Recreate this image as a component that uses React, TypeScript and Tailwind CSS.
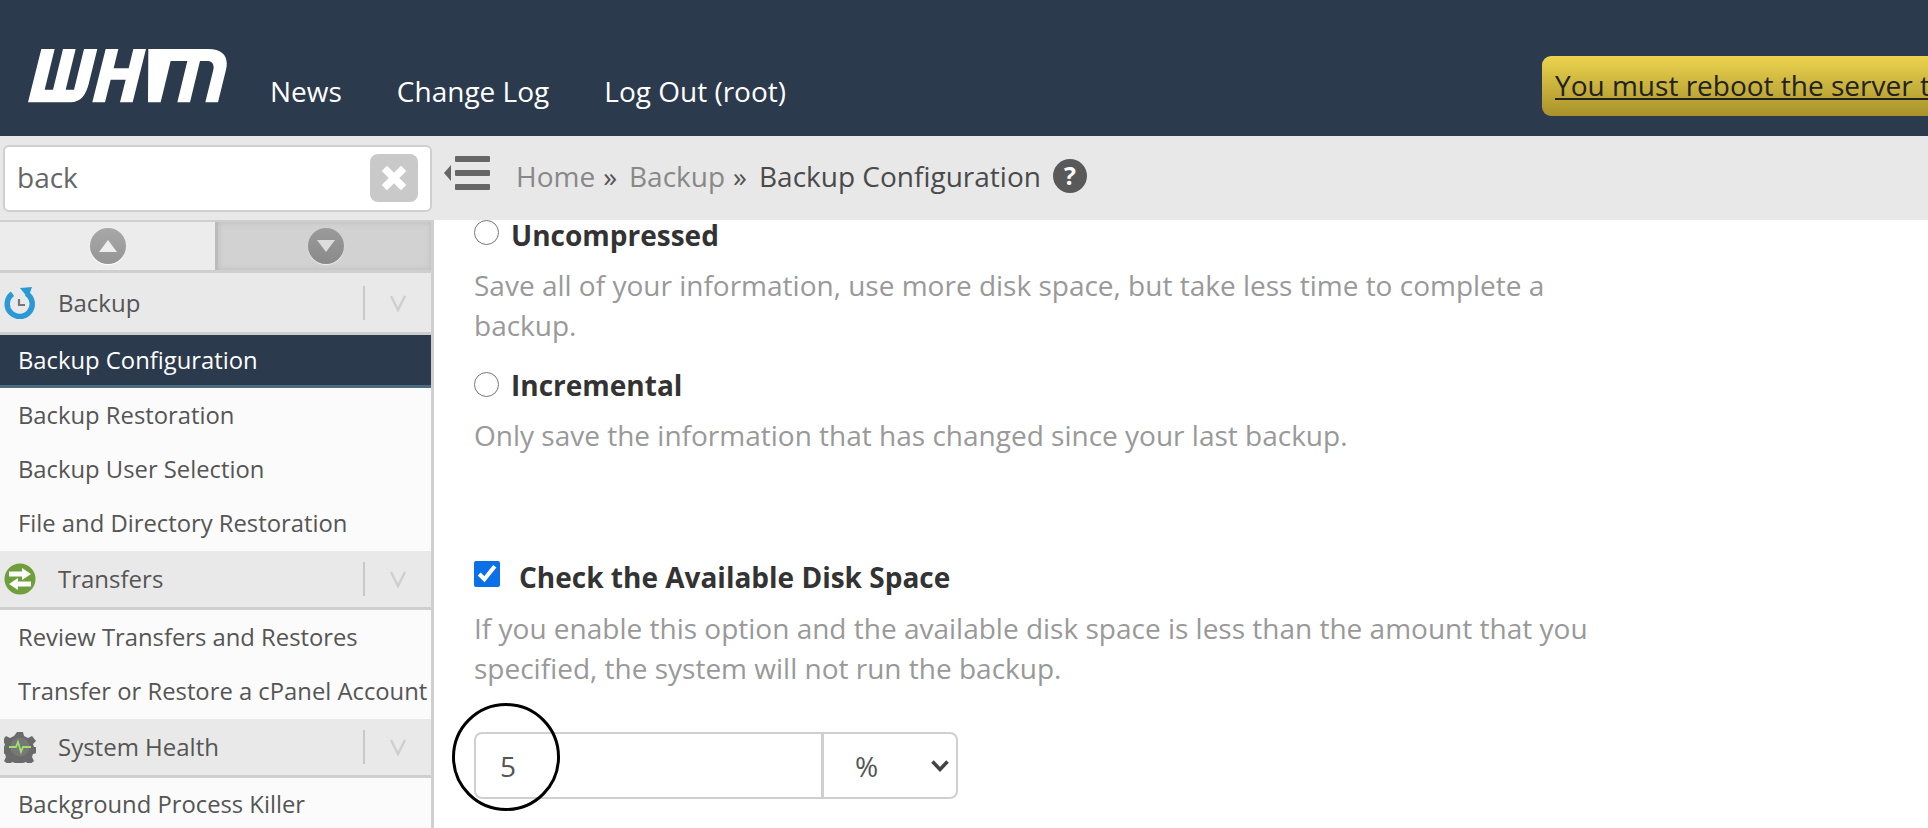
import React from 'react';

const WhmLogo = () => (
    <svg className="w-[200px] h-[55px]" viewBox="85 55 600 165" fill="#fff">
        <path d="M125 58h40l-30 122h25l30-122h38l-30 122h25l30-122h40l-26 105c-8 30-22 55-55 55H85z" />
        <path d="M318 58h38l-14 58h45l14-58h38l-40 160h-38l17-68h-45l-17 68h-38z" />
        <path d="M446 58h180c45 0 62 25 53 62l-24 98h-38l24-98c3-14-2-26-18-26h-22l-30 124h-38l30-124h-50l-30 124h-38z" />
    </svg>
);

const MenuIcon = () => (
    <svg className="w-[46px] h-[34px]" viewBox="0 0 46 34" fill="#666">
        <rect x="11" y="0" width="35" height="6" rx="1" />
        <rect x="11" y="14" width="35" height="6" rx="1" />
        <rect x="11" y="28" width="35" height="6" rx="1" />
        <path d="M0 17l7-8v16z" />
    </svg>
);

const BackupIcon = () => (
    <svg className="w-[32px] h-[32px]" viewBox="0 0 32 32" fill="none">
        <path d="M22.500 6.500A12.500 12.500 0 1 1 8.500 6.800" stroke="#2a9ad6" strokeWidth="5.500" />
        <path d="M16 1l12-1-4 11z" fill="#2a9ad6" />
        <path d="M15 12v6h6" stroke="#777" strokeWidth="2.200" />
    </svg>
);

const TransfersIcon = () => (
    <svg className="w-[32px] h-[32px]" viewBox="0 0 32 32">
        <circle cx="16" cy="16" r="15.500" fill="#6f9e3c" />
        <path d="M5 8.500h13V5l9 6-9 6v-3.500H5z" fill="#fff" />
        <path d="M27 18.500H14V15l-9 6 9 6v-3.500h13z" fill="#fff" />
    </svg>
);

const HealthIcon = () => (
    <svg className="w-[32px] h-[32px]" viewBox="0 0 32 32">
        <path d="M13 1h6l1 4 4 2 4-2 4 5-3 3 1 3h3v6l-4 1-1 3 2 4-5 4-3-3-3 1-1 3h-6l-1-3-3-1-3 3-5-4 2-4-1-3-4-1v-6h3l1-3-3-3 4-5 4 2 4-2z" fill="#6a6a6a" />
        <circle cx="16" cy="16" r="9.500" fill="#777" />
        <path d="M5 16h7l2-5 3 10 2-5h8" fill="none" stroke="#9fe06a" strokeWidth="1.800" />
    </svg>
);

const SectionHeader = ({ icon, label, heightClass }: { icon: React.ReactNode; label: string; heightClass: string }) => (
    <div className={`flex items-center bg-[#e9e9e9] border-b-[3px] border-[#cfcfcf] ${heightClass}`}>
        <div className="w-[58px] pl-[4px] shrink-0 flex items-center">{icon}</div>
        <span className="flex-1 text-[24px] text-[#555]">{label}</span>
        <div className="w-[2px] h-[34px] bg-[#c8c8c8]" />
        <div className="w-[66px] flex justify-center">
            <svg className="w-[18px] h-[18px]" viewBox="0 0 18 18" fill="none" stroke="#cfcfcf" strokeWidth="2.500">
                <path d="M2 2l7 14 7-14" />
            </svg>
        </div>
    </div>
);

const MenuItem = ({ label, heightClass = 'h-[54px]' }: { label: string; heightClass?: string }) => (
    <div className={`flex items-center pl-[18px] bg-[#fbfbfb] text-[23.800px] text-[#555] whitespace-nowrap ${heightClass}`}>
        {label}
    </div>
);

const App: React.FC = () => {
    return (
        <div className="w-[1928px] h-[828px] overflow-hidden bg-white font-['Open_Sans',sans-serif]">
            {/* Top bar */}
            <header className="h-[136px] bg-[#2b3a4c] flex">
                <div className="w-[1542px] shrink-0 flex items-start pl-[28px] pt-[48px]">
                    <WhmLogo />
                    <nav className="flex gap-[55px] ml-[42px] mt-[22px] text-[28px] text-white">
                        <a>News</a>
                        <a>Change Log</a>
                        <a>Log Out (root)</a>
                    </nav>
                </div>
                <div className="shrink-0 mt-[56px] h-[60px] pl-[13px] pr-[20px] pb-[2px] flex items-center rounded-[9px] bg-gradient-to-b from-[#ecd44f] to-[#a8922a] text-[28px] text-[#222] underline whitespace-nowrap">
                    You must reboot the server to apply the update
                </div>
            </header>

            {/* Search and breadcrumb */}
            <div className="h-[84px] bg-[#e8e8e8] flex items-center">
                <div className="w-[429px] h-[67px] ml-[3px] bg-white border-2 border-[#cfcfcf] rounded-[6px] flex items-center pl-[12px] pr-[12px] shrink-0">
                    <span className="flex-1 mb-[2px] text-[28px] text-[#666]">back</span>
                    <div className="w-[48px] h-[48px] rounded-[8px] bg-[#c9c9c9] flex items-center justify-center">
                        <svg className="w-[30px] h-[30px]" viewBox="0 0 28 28" stroke="#fff" strokeWidth="7">
                            <path d="M5 5l18 18M23 5L5 23" />
                        </svg>
                    </div>
                </div>
                <div className="ml-[12px] mb-[10px]">
                    <MenuIcon />
                </div>
                <div className="ml-[26px] mb-[4px] flex items-center text-[28px] text-[#888] whitespace-nowrap">
                    <span>Home</span>
                    <span className="ml-[8px] text-[#555]">»</span>
                    <span className="ml-[12px]">Backup</span>
                    <span className="ml-[8px] text-[#555]">»</span>
                    <span className="ml-[12px] text-[#4a4a4a]">Backup Configuration</span>
                    <span className="ml-[12px] w-[34px] h-[34px] rounded-full bg-[#595959] text-white font-bold text-[25px] flex items-center justify-center">?</span>
                </div>
            </div>

            <div className="flex h-[608px]">
                {/* Sidebar */}
                <aside className="w-[434px] shrink-0 border-r-[3px] border-[#cfcfcf] overflow-hidden">
                    <div className="h-[53px] flex border-t-2 border-b-[3px] border-[#cfcfcf]">
                        <div className="w-[215px] bg-[#ececec] flex items-center justify-center">
                            <div className="w-[36px] h-[36px] rounded-full bg-gradient-to-b from-[#a8a8a8] to-[#959595] shadow-[0_1px_1px_#fff] flex items-center justify-center">
                                <svg className="w-[18px] h-[12px]" viewBox="0 0 18 12" fill="#eee"><path d="M9 0l9 12H0z" /></svg>
                            </div>
                        </div>
                        <div className="flex-1 bg-[#d2d2d2] border-l-[3px] border-[#bbb] shadow-[inset_0_0_6px_#bbb] flex items-center justify-center pl-[3px]">
                            <div className="w-[36px] h-[36px] rounded-full bg-gradient-to-b from-[#9a9a9a] to-[#8a8a8a] shadow-[0_1px_1px_#eee] flex items-center justify-center">
                                <svg className="w-[18px] h-[12px]" viewBox="0 0 18 12" fill="#ddd"><path d="M9 12L18 0H0z" /></svg>
                            </div>
                        </div>
                    </div>
                    <SectionHeader icon={<BackupIcon />} label="Backup" heightClass="h-[62px]" />
                    <div className="h-[53px] pt-[2px] flex items-center pl-[18px] bg-[#2b3a4c] border-b-[3px] border-[#4d6b80] text-[23.800px] text-white">
                        Backup Configuration
                    </div>
                    <MenuItem label="Backup Restoration" heightClass="h-[55px]" />
                    <MenuItem label="Backup User Selection" />
                    <MenuItem label="File and Directory Restoration" heightClass="h-[54px]" />
                    <SectionHeader icon={<TransfersIcon />} label="Transfers" heightClass="h-[59px]" />
                    <MenuItem label="Review Transfers and Restores" heightClass="h-[55px]" />
                    <MenuItem label="Transfer or Restore a cPanel Account" heightClass="h-[54px]" />
                    <SectionHeader icon={<HealthIcon />} label="System Health" heightClass="h-[59px]" />
                    <MenuItem label="Background Process Killer" />
                </aside>

                {/* Form */}
                <main className="flex-1 pl-[40px]">
                    <div className="flex items-start h-[32px]">
                        <input type="radio" name="backup_type" className="w-[25px] h-[25px] m-0" />
                        <label className="ml-[12px] text-[28px] leading-[30px] font-bold text-[#333]">Uncompressed</label>
                    </div>
                    <p className="mt-[13px] w-[1120px] text-[28px] leading-[40px] text-[#999]">
                        Save all of your information, use more disk space, but take less time to complete a backup.
                    </p>
                    <div className="mt-[24px] flex items-start h-[32px]">
                        <input type="radio" name="backup_type" className="w-[25px] h-[25px] m-0 mt-[3px]" />
                        <label className="ml-[12px] text-[28px] leading-[32px] font-bold text-[#333]">Incremental</label>
                    </div>
                    <p className="mt-[14px] text-[28px] leading-[40px] text-[#999]">
                        Only save the information that has changed since your last backup.
                    </p>
                    <div className="mt-[106px] flex items-start h-[32px]">
                        <input type="checkbox" defaultChecked className="w-[26px] h-[26px] m-0 accent-[#0b6fe8]" />
                        <label className="ml-[19px] text-[28px] leading-[32px] font-bold text-[#333]">Check the Available Disk Space</label>
                    </div>
                    <p className="mt-[15px] w-[1120px] text-[28px] leading-[40px] text-[#999]">
                        If you enable this option and the available disk space is less than the amount that you specified, the system will not run the backup.
                    </p>
                    <div className="relative mt-[44px] w-[484px] h-[67px] flex border-2 border-[#cfcfcf] rounded-[8px]">
                        <div className="w-[345px] flex items-center pl-[24px] text-[28px] text-[#555]">5</div>
                        <div className="flex-1 border-l-[3px] border-[#cfcfcf] flex items-center pl-[31px] text-[28px] text-[#555]">
                            <span className="flex-1">%</span>
                            <svg className="w-[18px] h-[12px] mr-[7px]" viewBox="0 0 18 12" fill="none" stroke="#444" strokeWidth="3.500">
                                <path d="M1.500 1.500L9 9.500l7.500-8" />
                            </svg>
                        </div>
                        <div className="absolute left-[-24px] top-[-31px] w-[108px] h-[108px] rounded-full border-[3px] border-black" />
                    </div>
                </main>
            </div>
        </div>
    );
};

export default App;
